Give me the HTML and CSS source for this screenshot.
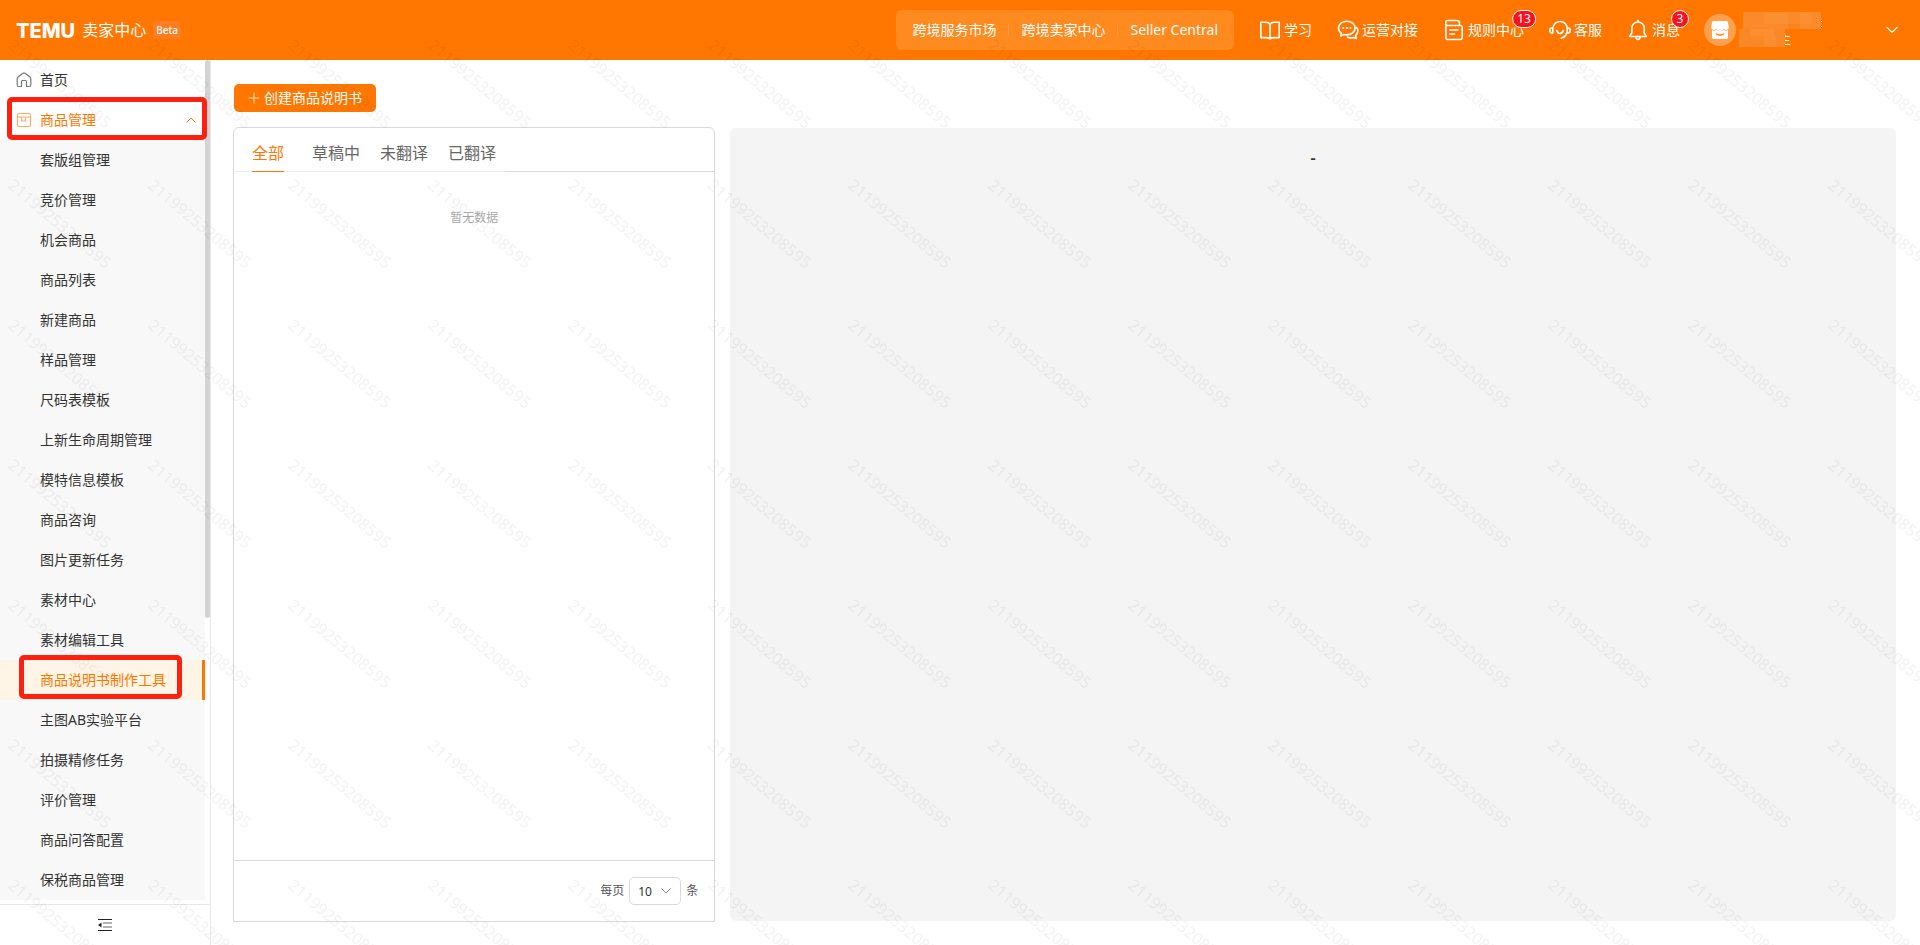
FILE: index.html
```html
<!DOCTYPE html>
<html lang="zh-CN">
<head>
<meta charset="utf-8">
<title>TEMU 卖家中心</title>
<link rel="stylesheet" href="styles.css">
</head>
<body>
<header class="topbar">
  <div class="brand">
    <span class="brand-logo">TEMU</span>
    <span class="brand-name">卖家中心</span>
    <span class="brand-beta">Beta</span>
  </div>
  <nav class="sites">
    <a href="#">跨境服务市场</a>
    <a href="#">跨境卖家中心</a>
    <a href="#">Seller Central</a>
  </nav>
  <nav class="tools">
    <a class="tool" href="#">
      <svg class="tool-icon" viewBox="0 0 22 22"><path d="M11 5.200C10 3.800 8.500 3.300 7 3.300H1.800V18.600H7C8.800 18.600 10 19 11 20C12 19 13.200 18.600 15 18.600H20.200V3.300H15C13.500 3.300 12 3.800 11 5.200ZM11 5.200V19.500"/></svg>
      <span>学习</span>
    </a>
    <a class="tool" href="#">
      <svg class="tool-icon" viewBox="0 0 22 22"><path d="M9.800 2.200C5.200 2.200 1.500 5.100 1.500 9C1.500 11.200 2.600 13 4.300 14.200L3.800 17L7 15.500C7.900 15.800 8.800 15.900 9.800 15.900C14.400 15.900 18.100 12.900 18.100 9C18.100 5.100 14.400 2.200 9.800 2.200ZM19.800 8.600C21.300 11.200 20.800 14.400 18.600 16.300L19.200 19.600L16.200 18.400C14.300 19.100 12.300 19 10.600 18.200"/><path class="dots" d="M6.200 9h.1M9.800 9h.1M13.400 9h.1"/></svg>
      <span>运营对接</span>
    </a>
    <a class="tool" href="#">
      <svg class="tool-icon" viewBox="0 0 22 22"><path d="M2.800 5.500V18.500A2 2 0 0 0 4.800 20.500H17.200A2 2 0 0 0 19.200 18.500V8.500A2 2 0 0 0 17.200 6.500H4.300A1.500 1.500 0 0 1 2.800 5V3.500A2 2 0 0 1 4.800 1.500H14A2.500 2.500 0 0 1 16.500 4V6.500M6.800 11H15M6.800 15H11.500"/></svg>
      <span>规则中心</span>
      <span class="badge">13</span>
    </a>
    <a class="tool" href="#">
      <svg class="tool-icon" viewBox="0 0 22 22"><path d="M3.800 9.200C4.500 5.200 7.500 2.500 11.200 2.500C15 2.500 18.300 5.300 18.300 10.500C18.300 15.500 15.500 18.300 12.200 19.200M3.800 8.800V14C1.800 14 .8 12.900 .8 11.400S1.800 8.800 3.800 8.800ZM18.200 8.800C20.200 8.800 21.200 9.900 21.200 11.400S20.200 14 18.200 14M7.800 11.500C8.400 13.700 9.800 14.500 11 14.500S13.700 13.700 14.200 11.500"/></svg>
      <span>客服</span>
    </a>
    <a class="tool" href="#">
      <svg class="tool-icon" viewBox="0 0 22 22"><path d="M11 3C7.500 3 4.800 5.700 4.800 9.200V14L2.600 17.500H19.400L17.200 14V9.200C17.200 5.700 14.500 3 11 3ZM11 1.200V3M8.800 18C9 19.600 9.900 20.400 11 20.400S13 19.600 13.200 18"/></svg>
      <span>消息</span>
      <span class="badge">3</span>
    </a>
  </nav>
  <button class="account" type="button" aria-label="账号">
    <svg class="avatar" viewBox="0 0 32 32"><circle cx="16" cy="16" r="16" fill="#ffa04d"/><path fill="#fff" d="M9.500 7H22.500Q23.500 7 23.800 8L25 13.500A3 3 0 0 1 19.500 14.500A3.600 3.600 0 0 1 12.500 14.500A3 3 0 0 1 7 13.500L8.200 8Q8.500 7 9.500 7Z"/><path fill="#fff" d="M8 16.300Q10.700 17.300 12.500 15.800Q16 18.500 19.500 15.800Q21.300 17.300 24 16.300V23.500Q24 25 22.500 25H9.500Q8 25 8 23.500Z"/><path fill="none" stroke="#f70" stroke-width="1.400" stroke-linecap="round" d="M12.500 20Q16 22.500 19.500 20"/></svg>
    <svg class="account-name" viewBox="0 0 90 40">
      <text x="42" y="34">主</text>
      <path fill="#fff" d="M84 11h2v1h-2zM84 16h2v1h-2z"/>
      <path fill="#fb8a2a" d="M7 2h78v17H7z"/>
      <path fill="#fb9032" d="M28 2h24v12H28zM64 2h12v12H64z"/>
      <path fill="#fa8422" d="M52 14h12v5H52z"/>
      <path fill="#fb8826" d="M3 19h46v18H3z"/>
      <path fill="#fb8e30" d="M15 19h24v7H15zM28 26h12v11H28z"/>
    </svg>
    <svg class="account-arrow" viewBox="0 0 12 8"><path d="M.5 1L6 6.500L11.500 1"/></svg>
  </button>
</header>

<div class="body">
  <aside class="sidebar">
    <nav class="menu">
      <a class="menu-item" href="#">
        <svg class="menu-icon menu-icon-grey" viewBox="0 0 16 16"><path d="M1.200 6.500Q1.200 5.500 2 4.900L7 1.200Q8 .6 9 1.200L14 4.900Q14.800 5.500 14.800 6.500V13Q14.800 14.500 13.300 14.500H10.500V9.800Q10.500 8.500 9.200 8.500H6.800Q5.500 8.500 5.500 9.800V14.500H2.700Q1.200 14.500 1.200 13Z"/></svg>
        首页
      </a>
      <a class="menu-item menu-open" href="#">
        <svg class="menu-icon menu-icon-orange" viewBox="0 0 16 16"><path d="M3 1.500H13Q14.500 1.500 14.500 3V13Q14.500 14.500 13 14.500H3Q1.500 14.500 1.500 13V3Q1.500 1.500 3 1.500ZM1.500 5H14.500M5.500 5V9H9.500V5"/></svg>
        商品管理
        <svg class="menu-arrow" viewBox="0 0 10 6"><path d="M.5 5.500L5 1L9.500 5.500"/></svg>
        <span class="mark mark-group"></span>
      </a>
      <div class="submenu">
        <a class="sub-item" href="#">套版组管理</a>
        <a class="sub-item" href="#">竞价管理</a>
        <a class="sub-item" href="#">机会商品</a>
        <a class="sub-item" href="#">商品列表</a>
        <a class="sub-item" href="#">新建商品</a>
        <a class="sub-item" href="#">样品管理</a>
        <a class="sub-item" href="#">尺码表模板</a>
        <a class="sub-item" href="#">上新生命周期管理</a>
        <a class="sub-item" href="#">模特信息模板</a>
        <a class="sub-item" href="#">商品咨询</a>
        <a class="sub-item" href="#">图片更新任务</a>
        <a class="sub-item" href="#">素材中心</a>
        <a class="sub-item" href="#">素材编辑工具</a>
        <a class="sub-item sub-active" href="#">商品说明书制作工具<span class="mark mark-page"></span></a>
        <a class="sub-item" href="#">主图AB实验平台</a>
        <a class="sub-item" href="#">拍摄精修任务</a>
        <a class="sub-item" href="#">评价管理</a>
        <a class="sub-item" href="#">商品问答配置</a>
        <a class="sub-item" href="#">保税商品管理</a>
      </div>
      <span class="thumb"></span>
    </nav>
    <button class="collapse" type="button" aria-label="收起菜单">
      <svg viewBox="0 0 14 12"><path stroke="#222" d="M0 .5H14M0 11.500H14"/><path stroke="#666" d="M5 4H14M5 8H14"/><path fill="#222" d="M3.500 3.500V8.500L0 6Z"/></svg>
    </button>
  </aside>

  <main class="content">
    <button class="create" type="button">
      <svg viewBox="0 0 12 12"><path d="M6 .5V11.500M.5 6H11.500"/></svg>
      创建商品说明书
    </button>
    <div class="panels">
      <section class="list">
        <div class="list-head">
          <div class="tabs" role="tablist">
            <button class="tab tab-active" type="button" role="tab" aria-selected="true">全部</button>
            <button class="tab" type="button" role="tab">草稿中</button>
            <button class="tab" type="button" role="tab">未翻译</button>
            <button class="tab" type="button" role="tab">已翻译</button>
          </div>
        </div>
        <div class="list-body">暂无数据</div>
        <div class="list-foot">
          <label for="size">每页</label>
          <span class="size-box">
            <select id="size" class="size"><option>10</option></select>
            <svg class="size-arrow" viewBox="0 0 10 6"><path d="M.5 .5L5 5L9.500 .5"/></svg>
          </span>
          <span>条</span>
        </div>
      </section>
      <section class="preview">-</section>
    </div>
  </main>
</div>

<svg class="watermark" aria-hidden="true">
  <defs>
    <pattern id="wm" width="140" height="140" patternUnits="userSpaceOnUse">
      <text transform="translate(7 47) rotate(40)">21199253208595</text>
    </pattern>
  </defs>
  <rect width="100%" height="100%" fill="url(#wm)"/>
</svg>
</body>
</html>
```
FILE: styles.css
```css
* { box-sizing: border-box; }
body {
  margin: 0;
  min-height: 100vh;
  display: flex;
  flex-direction: column;
  font: 14px/20px "Noto Sans", "Noto Sans CJK SC", sans-serif;
  color: #333;
  background: #fff;
}
a { color: inherit; text-decoration: none; }
button { font: inherit; color: inherit; border: 0; padding: 0; background: none; }
svg { display: block; flex: none; }

/* top bar */
.topbar {
  display: flex;
  align-items: center;
  height: 60px;
  padding: 0 22px 0 16px;
  background: #ff7700;
  color: #fff;
}
.brand { display: flex; align-items: center; margin-right: auto; }
.brand-logo { font: 800 20px/24px Inter, sans-serif; margin-right: 7px; padding-top: 2px; }
.brand-name { font-size: 16px; margin-right: 7px; }
.brand-beta {
  padding: 0 3px;
  border-radius: 3px;
  background: #ff7d22;
  font-size: 10px;
  line-height: 18px;
  font-weight: 500;
}
.sites {
  display: flex;
  align-items: center;
  height: 40px;
  padding: 0 4px;
  margin-right: 25px;
  border-radius: 6px;
  background: #fe8a20;
}
.sites a { padding: 0 12px; line-height: 12px; border-left: 1px solid #ff9a40; }
.sites a:first-child { border-left: 0; }
.tools { display: flex; gap: 25px; margin-right: 24px; }
.tool { position: relative; display: flex; align-items: center; gap: 3px; }
.tool-icon { width: 22px; height: 22px; fill: none; stroke: #fff; stroke-width: 1.6; stroke-linejoin: round; stroke-linecap: round; }
.tool-icon .dots { stroke-width: 2; }
.badge {
  position: absolute;
  left: 100%;
  top: -9px;
  transform: translateX(-50%);
  min-width: 18px;
  padding: 0 4px;
  border: 1px solid #fff;
  border-radius: 9px;
  background: #fb1020;
  font-size: 12px;
  line-height: 16px;
  text-align: center;
}
.account { display: flex; align-items: center; width: 194px; }
.avatar { width: 32px; height: 32px; }
.account-name { width: 90px; height: 40px; fill: #fff; font-size: 13px; }
.account-arrow { width: 12px; height: 8px; margin-left: auto; fill: none; stroke: #fff; stroke-width: 1.2; }

.body { flex: 1; display: flex; }

/* sidebar */
.sidebar { display: flex; flex-direction: column; flex: none; width: 211px; border-right: 1px solid #e8e8e8; }
.menu { position: relative; padding-right: 5px; }
.menu-item { position: relative; display: flex; align-items: center; gap: 8px; height: 40px; padding: 0 9px 0 16px; }
.menu-icon { width: 16px; height: 16px; fill: none; stroke-width: 1.2; }
.menu-icon-grey { stroke: #777; }
.menu-icon-orange { stroke: #ffab66; }
.menu-open { color: #ff7700; }
.menu-arrow { width: 10px; height: 6px; margin-left: auto; fill: none; stroke: #ff7700; }
.submenu { background: #f8f8f8; }
.sub-item { position: relative; display: block; padding-left: 40px; line-height: 40px; }
.sub-active { color: #ff7700; background: #fff5e6; border-right: 3px solid #ff7700; }
.thumb { position: absolute; right: 0; top: 0; width: 5px; height: calc(200% / 3 - 2px); border-radius: 3px; background: #d4d4d4; }
.mark { position: absolute; z-index: 1; border: 5px solid #ff2010; border-radius: 5px; }
.mark-group { left: 7px; right: -2px; top: -3px; bottom: 0; }
.mark-page { left: 19px; right: 20px; top: -5px; bottom: 1px; }
.collapse {
  flex: 1;
  display: flex;
  justify-content: center;
  align-items: center;
  margin-top: 4px;
  border-top: 1px solid #e8e8e8;
}
.collapse svg { width: 14px; height: 12px; fill: none; }

/* content */
.content { flex: 1; display: flex; flex-direction: column; align-items: flex-start; padding: 24px 24px 23px 22px; }
.create {
  display: flex;
  align-items: center;
  gap: 4px;
  height: 28px;
  margin: 0 0 15px 1px;
  padding: 0 14px;
  border-radius: 5px;
  background: #ff7700;
  color: #fff;
}
.create svg { width: 12px; height: 12px; stroke: #ffe0c4; }
.panels { flex: 1; align-self: stretch; display: flex; gap: 15px; }
.list {
  flex: 0 0 29%;
  display: flex;
  flex-direction: column;
  border: 1px solid #d9d9d9;
  border-radius: 6px 6px 0 0;
}
.list-head { display: flex; border-bottom: 1px solid #d9d9d9; }
.tabs { display: flex; gap: 20px; padding: 0 9px 0 18px; margin-bottom: -1px; border-bottom: 1px solid #ebebeb; }
.tab { font-size: 16px; line-height: 24px; height: 44px; padding: 8px 0 2px; margin-bottom: -1px; border-bottom: 1px solid transparent; color: #666; }
.tab-active { margin-right: 8px; color: #ff7700; border-color: #ff7700; }
.list-body { flex: 1; padding-top: 36px; text-align: center; font-size: 12px; color: #aaa; }
.list-foot {
  display: flex;
  align-items: center;
  justify-content: flex-end;
  gap: 5px;
  height: 61px;
  padding-right: 16px;
  border-top: 1px solid #d9d9d9;
  font-size: 12px;
  color: #555;
}
.size-box { position: relative; }
.size {
  display: block;
  width: 52px;
  height: 28px;
  padding: 0 8px;
  appearance: none;
  border: 1px solid #d9d9d9;
  border-radius: 5px;
  background: #fff;
  font: 12px "Noto Sans", sans-serif;
  color: #333;
}
.size-arrow { position: absolute; right: 10px; top: 11px; width: 10px; height: 6px; fill: none; stroke: #888; pointer-events: none; }
.preview {
  flex: 1;
  margin: 1px 0;
  padding-top: 18px;
  border-radius: 6px;
  background: #f4f4f4;
  text-align: center;
  font-size: 16px;
  line-height: 24px;
  font-weight: 600;
}

/* account id watermark */
.watermark { position: fixed; inset: 0; width: 100%; height: 100%; pointer-events: none; }
.watermark text { font-size: 16px; fill: #000; fill-opacity: .05; }
```
